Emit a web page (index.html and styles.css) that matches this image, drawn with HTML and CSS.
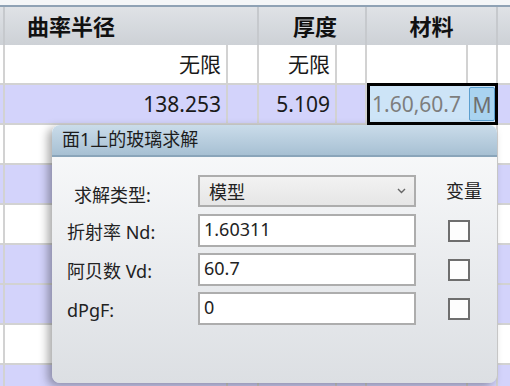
FILE: index.html
```html
<!DOCTYPE html>
<html lang="zh-CN">
  <head>
    <meta charset="UTF-8" />
    <title>镜头数据</title>
    <link rel="stylesheet" href="styles.css">
  </head>
  <body>
    <div class="editor">
      <div class="top-strip"></div>
      <div class="head">
        <div class="hc stub"></div>
        <div class="hc col-r">曲率半径</div>
        <div class="hc col-t">厚度</div>
        <div class="hc col-m">材料</div>
        <div class="hc col-c"></div>
      </div>

      <div class="row">
        <div class="c stub"></div>
        <div class="c r-val">无限</div>
        <div class="c r-sol"></div>
        <div class="c t-val">无限</div>
        <div class="c t-sol"></div>
        <div class="c m-val"></div>
        <div class="c m-sol"></div>
        <div class="c rest"></div>
      </div>

      <div class="row alt">
        <div class="c stub"></div>
        <div class="c r-val">138.253</div>
        <div class="c r-sol"></div>
        <div class="c t-val">5.109</div>
        <div class="c t-sol"></div>
        <div class="c selected">
          <span class="sel-text">1.60,60.7</span>
          <span class="sel-btn">M</span>
        </div>
        <div class="c rest"></div>
      </div>

      <!-- rows hidden behind the dialog -->
      <div class="row">
        <div class="c stub"></div>
        <div class="c r-val"></div>
        <div class="c r-sol"></div>
        <div class="c t-val"></div>
        <div class="c t-sol"></div>
        <div class="c m-val"></div>
        <div class="c m-sol"></div>
        <div class="c rest"></div>
      </div>

      <div class="row alt">
        <div class="c stub"></div>
        <div class="c r-val"></div>
        <div class="c r-sol"></div>
        <div class="c t-val"></div>
        <div class="c t-sol"></div>
        <div class="c m-val"></div>
        <div class="c m-sol"></div>
        <div class="c rest"></div>
      </div>

      <div class="row">
        <div class="c stub"></div>
        <div class="c r-val"></div>
        <div class="c r-sol"></div>
        <div class="c t-val"></div>
        <div class="c t-sol"></div>
        <div class="c m-val"></div>
        <div class="c m-sol"></div>
        <div class="c rest"></div>
      </div>

      <div class="row alt">
        <div class="c stub"></div>
        <div class="c r-val"></div>
        <div class="c r-sol"></div>
        <div class="c t-val"></div>
        <div class="c t-sol"></div>
        <div class="c m-val"></div>
        <div class="c m-sol"></div>
        <div class="c rest"></div>
      </div>

      <div class="row alt">
        <div class="c stub"></div>
        <div class="c r-val"></div>
        <div class="c r-sol"></div>
        <div class="c t-val"></div>
        <div class="c t-sol"></div>
        <div class="c m-val"></div>
        <div class="c m-sol"></div>
        <div class="c rest"></div>
      </div>

      <div class="row">
        <div class="c stub"></div>
        <div class="c r-val"></div>
        <div class="c r-sol"></div>
        <div class="c t-val"></div>
        <div class="c t-sol"></div>
        <div class="c m-val"></div>
        <div class="c m-sol"></div>
        <div class="c rest"></div>
      </div>

      <div class="row alt">
        <div class="c stub"></div>
        <div class="c r-val"></div>
        <div class="c r-sol"></div>
        <div class="c t-val"></div>
        <div class="c t-sol"></div>
        <div class="c m-val"></div>
        <div class="c m-sol"></div>
        <div class="c rest"></div>
      </div>
    </div>

    <!-- glass solve dialog -->
    <div class="dialog">
      <div class="dialog-title">面1上的玻璃求解</div>
      <div class="dialog-body">
        <div class="label first">求解类型:</div>
        <div class="select">
          <span>模型</span>
          <svg class="chev" width="9" height="6" viewBox="0 0 9 6">
            <polyline points="1,1 4.5,4.5 8,1" fill="none" stroke="#666" stroke-width="1.4"/>
          </svg>
        </div>
        <div class="var-head">变量</div>

        <div class="label">折射率 Nd:</div>
        <div class="field">1.60311</div>
        <div class="check-cell"><span class="check"></span></div>

        <div class="label">阿贝数 Vd:</div>
        <div class="field">60.7</div>
        <div class="check-cell"><span class="check"></span></div>

        <div class="label">dPgF:</div>
        <div class="field">0</div>
        <div class="check-cell"><span class="check"></span></div>
      </div>
    </div>
  </body>
</html>
```

FILE: styles.css
```css
* {
  box-sizing: border-box;
}

body {
  width: 510px;
  height: 386px;
  margin: 0;
  padding: 0;
  overflow: hidden;
  background-color: #ffffff;
  font-family: 'Noto Sans', 'Noto Sans CJK SC', sans-serif;
  color: #1a1a1a;
  position: relative;
}

.editor {
  width: 510px;
}

.top-strip {
  height: 5px;
  background-color: #f4f6f8;
}

.head {
  display: flex;
  height: 40px;
  border-top: 2px solid #8fa2b5;
  background: linear-gradient(#dfe2e6, #cdd1d6);
  font-weight: 700;
  font-size: 22px;
  line-height: 38px;
  color: #111;
}

.hc {
  border-right: 2px solid #c6c9cd;
  white-space: nowrap;
  overflow: hidden;
}

.hc.stub {
  width: 5px;
}

.col-r {
  width: 254px;
  padding-left: 22px;
}

.col-t {
  width: 108px;
  text-align: right;
  padding-right: 28px;
}

.col-m {
  width: 131px;
  text-align: center;
}

.col-c {
  flex: 1;
  border-right: none;
}

.row {
  display: flex;
  height: 40px;
  border-bottom: 2px solid #d2d2d2;
  background-color: #ffffff;
  font-size: 21px;
  line-height: 38px;
}

.row.alt {
  background-color: #d3d3fb;
}

.c {
  border-right: 2px solid #d2d2d2;
  white-space: nowrap;
  overflow: hidden;
}

.c.stub {
  width: 5px;
}

.r-val {
  width: 223px;
  text-align: right;
  padding-right: 5px;
}

.r-sol {
  width: 31px;
}

.t-val {
  width: 78px;
  text-align: right;
  padding-right: 5px;
}

.t-sol {
  width: 30px;
}

.m-val {
  width: 101px;
  text-align: right;
  padding-right: 5px;
}

.m-sol {
  width: 30px;
}

.rest {
  flex: 1;
  border-right: none;
}

.selected {
  width: 131px;
  margin: -2px 0 -2px 0;
  border: 3px solid #000;
  background-color: #cde4f7;
  display: flex;
  align-items: stretch;
  justify-content: space-between;
  color: #7d7d7d;
  line-height: 36px;
}

.sel-text {
  padding-left: 2px;
}

.sel-btn {
  width: 26px;
  margin: 1px 0;
  background-color: #a9d3f0;
  border: 1px solid #5b9fcf;
  border-radius: 2px;
  text-align: center;
  color: #6f6f6f;
  line-height: 34px;
}

.dialog {
  position: absolute;
  left: 52px;
  top: 125px;
  width: 445px;
  height: 258px;
  border-radius: 8px;
  overflow: hidden;
  background: linear-gradient(#fafbfc, #dcdfe3);
  box-shadow: -4px 3px 10px rgba(0, 0, 0, 0.35);
}

.dialog-title {
  height: 32px;
  padding-left: 10px;
  background: linear-gradient(#cadcea, #a7c0d3);
  border-bottom: 2px solid #8aa5ba;
  font-size: 18px;
  line-height: 29px;
  color: #1c1c1c;
}

.dialog-body {
  display: grid;
  grid-template-columns: 131px 218px 1fr;
  grid-auto-rows: 33px;
  row-gap: 6px;
  padding: 18px 0 0 15px;
  font-size: 18px;
  color: #222;
}

.label {
  line-height: 36px;
  white-space: nowrap;
}

.label.first {
  padding-left: 7px;
  line-height: 40px;
}

.select {
  display: flex;
  align-items: center;
  justify-content: space-between;
  height: 32px;
  padding: 0 8px 0 9px;
  border: 2px solid #adadad;
  background: linear-gradient(#f2f2f2, #e6e6e6);
}

.chev {
  margin-bottom: 1px;
}

.field {
  border: 2px solid #adadad;
  background-color: #ffffff;
  padding-left: 4px;
  line-height: 26px;
}

.var-head {
  padding-left: 30px;
  line-height: 32px;
}

.check-cell {
  display: flex;
  align-items: center;
  padding-left: 32px;
}

.check {
  width: 22px;
  height: 22px;
  border: 2px solid #6e6e6e;
  background-color: #fdfdfd;
}
```
